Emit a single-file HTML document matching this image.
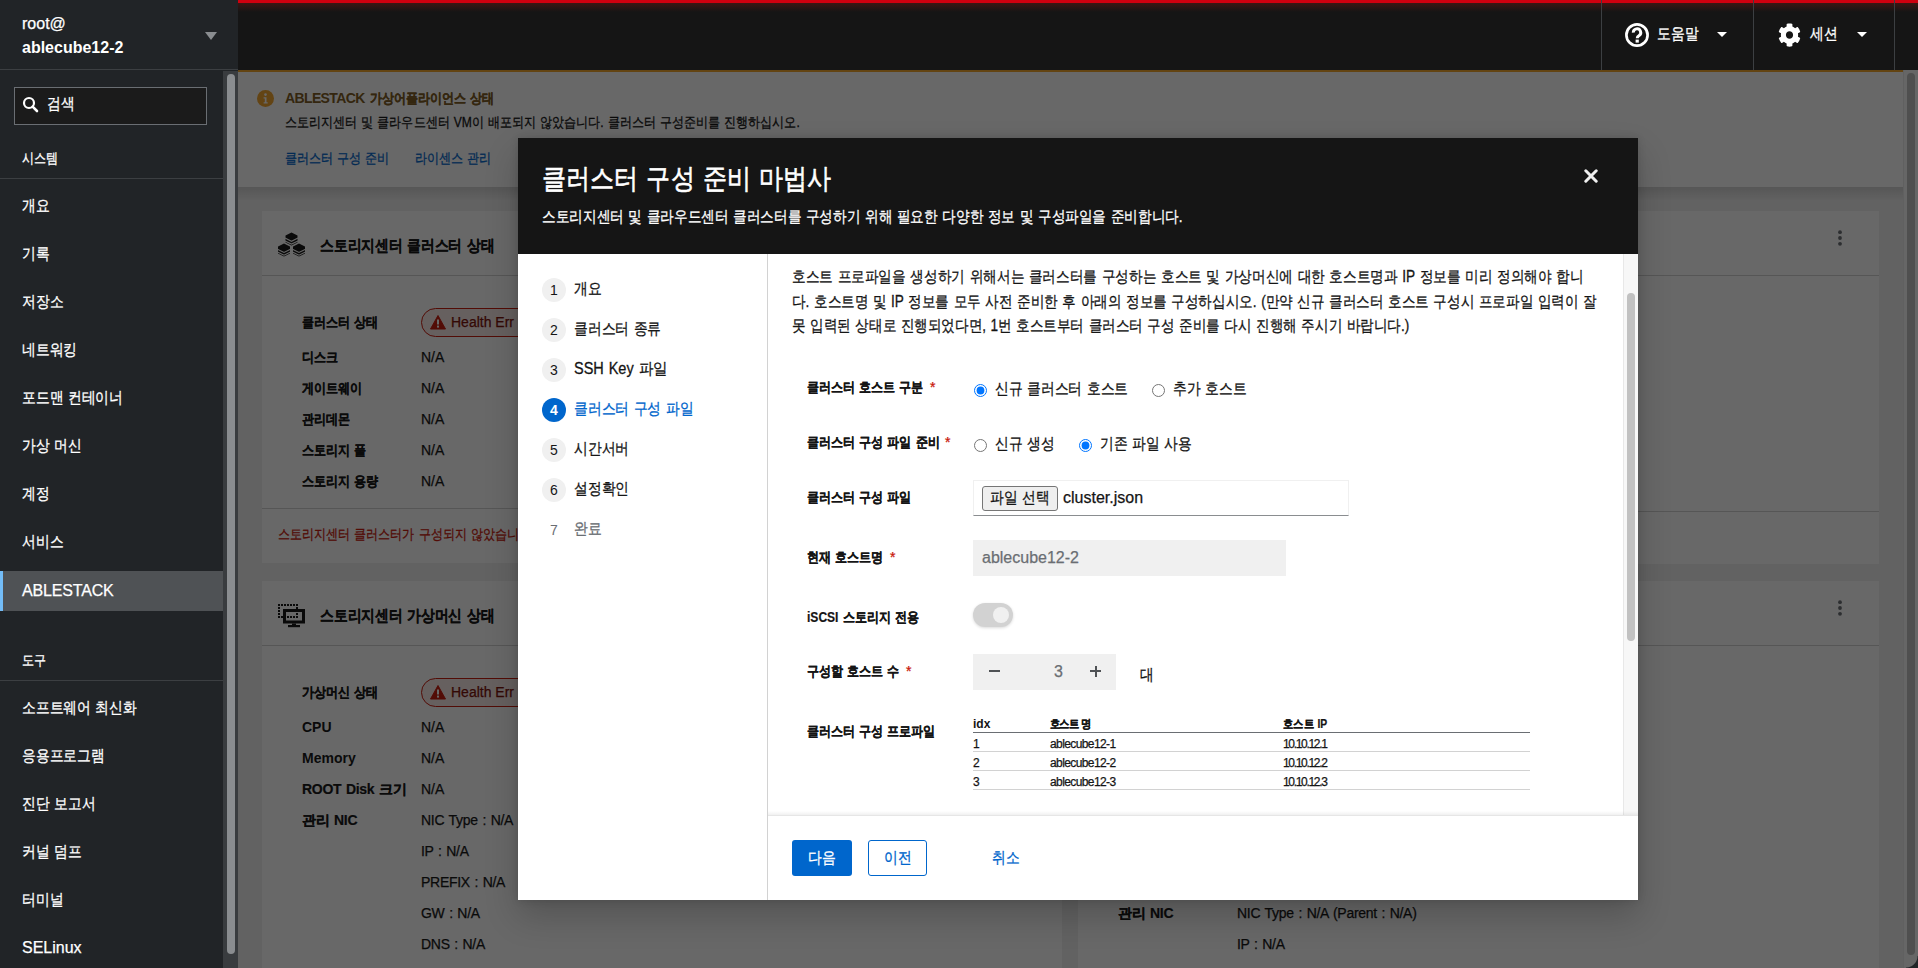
<!DOCTYPE html>
<html><head><meta charset="utf-8">
<style>
*{box-sizing:border-box;margin:0;padding:0}
html,body{width:1918px;height:968px;overflow:hidden;background:#212427;font-family:"Liberation Sans",sans-serif;color:#151515}
.a{position:absolute}
.t{position:absolute;white-space:nowrap;line-height:20px;letter-spacing:-0.152em;word-spacing:0.16em}
.L{word-spacing:0.07em}
.t{-webkit-text-stroke:0.25px}
.n{letter-spacing:0}
.b{-webkit-text-stroke:0}
.kr{letter-spacing:0;word-spacing:0.06em;transform:scaleX(.86);transform-origin:0 0;-webkit-text-stroke:0.3px}
.k{letter-spacing:0;word-spacing:0.06em;transform:scaleX(.86);transform-origin:0 0;-webkit-text-stroke:0.2px}
.s16{font-size:16px}.s14{font-size:14px}.s12{font-size:12px}
.b{font-weight:bold}
.w{color:#fff}
/* sidebar */
#side{position:absolute;left:0;top:0;width:238px;height:968px;background:#212427;color:#fff}
/* header */
#hdr{position:absolute;left:238px;top:0;width:1680px;height:70px;background:#151515}
.sep{position:absolute;top:0;width:1px;height:70px;background:#3c3f42}
.caretw{position:absolute;width:0;height:0;border-left:5px solid transparent;border-right:5px solid transparent;border-top:5px solid #fff}
/* content */
.card{position:absolute;background:#fff}
.hr{position:absolute;height:1px;background:#d2d2d2}
.badge{position:absolute;height:29px;border:1px solid #c9190b;border-radius:15px;background:#faeae8}
/* modal */
#modal{position:absolute;left:518px;top:138px;width:1120px;height:762px;background:#fff;box-shadow:0 16px 32px 0 rgba(0,0,0,0.2),0 0 8px 0 rgba(0,0,0,0.14);overflow:hidden}
.step{position:absolute;left:24px;width:24px;height:24px;border-radius:12px;background:#f0f0f0;font-size:14px;line-height:24px;text-align:center;color:#151515}
</style></head>
<body>
<!-- ============ SIDEBAR ============ -->
<div id="side">
  <div class="a" style="left:0;top:0;width:238px;height:70px;border-bottom:1px solid #3c3f42"></div>
  <div class="t" style="left:22px;top:14px;font-size:16px;letter-spacing:0">root@</div>
  <div class="t b" style="left:22px;top:38px;font-size:16px;letter-spacing:0">ablecube12-2</div>
  <div class="a" style="left:205px;top:32px;width:0;height:0;border-left:6px solid transparent;border-right:6px solid transparent;border-top:8px solid #8a8d90"></div>
  <div class="a" style="left:223px;top:71px;width:15px;height:897px;background:#393c3f"></div>
  <div class="a" style="left:227px;top:74px;width:8px;height:880px;background:#8a8d90;border-radius:4px"></div>
  <div class="a" style="left:14px;top:87px;width:193px;height:38px;background:#1b1b1b;border:1px solid #6a6e73"></div>
  <svg class="a" style="left:22px;top:96px" width="17" height="17" viewBox="0 0 17 17"><circle cx="7" cy="7" r="5" fill="none" stroke="#fff" stroke-width="2.2"/><line x1="10.6" y1="10.6" x2="15" y2="15" stroke="#fff" stroke-width="2.6" stroke-linecap="round"/></svg>
  <div class="t s16 kr" style="left:47px;top:94px">검색</div>
  <div class="t s14 kr" style="left:22px;top:148px">시스템</div>
  <div class="a" style="left:0;top:178px;width:223px;height:1px;background:#3c3f42"></div>
  <div class="t s16 kr" style="left:22px;top:196px">개요</div>
  <div class="t s16 kr" style="left:22px;top:244px">기록</div>
  <div class="t s16 kr" style="left:22px;top:292px">저장소</div>
  <div class="t s16 kr" style="left:22px;top:340px">네트워킹</div>
  <div class="t s16 kr" style="left:22px;top:388px">포드맨 컨테이너</div>
  <div class="t s16 kr" style="left:22px;top:436px">가상 머신</div>
  <div class="t s16 kr" style="left:22px;top:484px">계정</div>
  <div class="t s16 kr" style="left:22px;top:532px">서비스</div>
  <div class="a" style="left:0;top:571px;width:223px;height:40px;background:#4f5255;border-left:3px solid #73bcf7"></div>
  <div class="t s16" style="left:22px;top:581px;letter-spacing:-0.01em">ABLESTACK</div>
  <div class="t s14 kr" style="left:22px;top:650px">도구</div>
  <div class="a" style="left:0;top:680px;width:223px;height:1px;background:#3c3f42"></div>
  <div class="t s16 kr" style="left:22px;top:698px">소프트웨어 최신화</div>
  <div class="t s16 kr" style="left:22px;top:746px">응용프로그램</div>
  <div class="t s16 kr" style="left:22px;top:794px">진단 보고서</div>
  <div class="t s16 kr" style="left:22px;top:842px">커널 덤프</div>
  <div class="t s16 kr" style="left:22px;top:890px">터미널</div>
  <div class="t s16" style="left:22px;top:938px;letter-spacing:0">SELinux</div>
</div>

<!-- ============ HEADER ============ -->
<div id="hdr">
  <div class="a" style="left:0;top:0;width:1680px;height:3px;background:#cf000f"></div>
  <div class="a" style="left:0;top:3px;width:1680px;height:9px;background:linear-gradient(rgba(201,25,11,0.22),rgba(201,25,11,0))"></div>
  <div class="sep" style="left:1363px"></div><div class="sep" style="left:1515px"></div><div class="sep" style="left:1656px"></div>
  <svg class="a" style="left:1387px;top:23px" width="24" height="24" viewBox="0 0 24 24"><circle cx="12" cy="12" r="10.6" fill="none" stroke="#fff" stroke-width="2.7"/><path d="M8.3 9.6a3.7 3.7 0 1 1 5.6 3.1c-1.2.7-1.6 1.1-1.6 2.2v.4" fill="none" stroke="#fff" stroke-width="3"/><rect x="10.6" y="16.6" width="3.2" height="3" fill="#fff"/></svg>
  <div class="t s16 w kr" style="left:1419px;top:24px">도움말</div>
  <div class="caretw" style="left:1479px;top:32px"></div>
  <svg class="a" style="left:1540px;top:22.5px" width="23" height="24" viewBox="0 0 512 512" preserveAspectRatio="none"><path fill="#fff" d="M487.4 315.7l-42.6-24.6c4.3-23.2 4.3-47 0-70.2l42.6-24.6c4.9-2.8 7.1-8.6 5.5-14-11.1-35.6-30-67.8-54.7-94.6-3.8-4.1-10-5.1-14.8-2.3L380.8 110c-17.9-15.4-38.5-27.3-60.8-35.1V25.8c0-5.6-3.9-10.5-9.4-11.7-36.7-8.2-74.3-7.8-109.2 0-5.5 1.2-9.400 6.1-9.4 11.7V75c-22.2 7.9-42.8 19.8-60.8 35.1L88.7 85.5c-4.9-2.8-11-1.9-14.8 2.3-24.7 26.7-43.6 58.9-54.7 94.6-1.7 5.4.6 11.2 5.5 14L67.3 221c-4.3 23.2-4.3 47 0 70.2l-42.6 24.6c-4.9 2.8-7.1 8.6-5.5 14 11.1 35.6 30 67.8 54.7 94.6 3.8 4.1 10 5.1 14.8 2.3l42.6-24.6c17.9 15.4 38.5 27.3 60.8 35.1v49.2c0 5.6 3.9 10.5 9.4 11.700 36.7 8.2 74.3 7.8 109.2 0 5.5-1.2 9.4-6.1 9.4-11.7v-49.2c22.2-7.9 42.8-19.8 60.8-35.1l42.6 24.6c4.9 2.8 11 1.9 14.8-2.3 24.7-26.7 43.6-58.9 54.7-94.6 1.5-5.5-.7-11.3-5.6-14.1zM256 336c-44.1 0-80-35.900-80-80s35.9-80 80-80 80 35.9 80 80-35.9 80-80 80z"/></svg>
  <div class="t s16 w kr" style="left:1572px;top:24px">세션</div>
  <div class="caretw" style="left:1619px;top:32px"></div>
</div>

<!-- ============ CONTENT (under overlay) ============ -->
<div class="a" style="left:238px;top:70px;width:1680px;height:898px;background:#f0f0f0"></div>
<!-- alert -->
<div class="a" style="left:238px;top:70px;width:1665px;height:117px;background:#fff;border-top:2px solid #f2a52a"></div>
<div class="a" style="left:238px;top:187px;width:1665px;height:14px;background:linear-gradient(rgba(0,0,0,0.12),rgba(0,0,0,0))"></div>
<svg class="a" style="left:257px;top:90px" width="17" height="17" viewBox="0 0 17 17"><circle cx="8.5" cy="8.5" r="8.5" fill="#f3a52d"/><circle cx="8.5" cy="4.6" r="1.3" fill="#fff"/><path d="M6.6 7.2h2.9v5h1.2v1.4H6.6v-1.4h1.2V8.6H6.6z" fill="#fff"/></svg>
<div class="t s14 b" style="left:285px;top:88px;color:#7d5a22;letter-spacing:-0.045em">ABLESTACK</div><div class="t s14 b k" style="left:370px;top:88px;color:#7d5a22">가상어플라이언스 상태</div>
<div class="t s14 kr" style="left:285px;top:112px">스토리지센터 및 클라우드센터 <span class="n">VM</span>이 배포되지 않았습니다. 클러스터 구성준비를 진행하십시오.</div>
<div class="t s14 kr" style="left:285px;top:148px;color:#0066cc">클러스터 구성 준비</div>
<div class="t s14 kr" style="left:415px;top:148px;color:#0066cc">라이센스 관리</div>

<!-- card 1 -->
<div class="card" style="left:262px;top:211px;width:800px;height:352px"></div>
<div class="hr" style="left:262px;top:275px;width:800px"></div>
<div class="hr" style="left:262px;top:508px;width:800px"></div>
<svg class="a" style="left:277px;top:232px" width="29" height="26" viewBox="0 0 29 26"><path d="M14.5 0.5L20.5 3.5V10.5L14.5 13.5L8.5 10.5V3.5ZM7 11.6L13 14.6V21.6L7 24.6L1 21.6V14.6ZM22 11.6L28 14.6V21.6L22 24.6L16 21.6V14.6Z" fill="#151515"/><path d="M8.0 6.1L14.5 9.3L21.0 6.1M8.0 8.9L14.5 12.100000000000001L21.0 8.9M0.5 17.2L7 20.4L13.5 17.2M0.5 20.0L7 23.2L13.5 20.0M15.5 17.2L22 20.4L28.5 17.2M15.5 20.0L22 23.2L28.5 20.0" fill="none" stroke="#fff" stroke-width="1.1"/></svg>
<div class="t s16 b k" style="left:320px;top:236px">스토리지센터 클러스터 상태</div>
<div class="t s14 b k" style="left:302px;top:312px">클러스터 상태</div>
<div class="badge" style="left:421px;top:308px;width:120px"></div>
<svg class="a" style="left:430px;top:315px" width="16" height="15" viewBox="0 0 16 15"><path d="M8 0.5L15.5 14H0.5z" fill="#c9190b" stroke="#c9190b" stroke-linejoin="round"/><rect x="7" y="4.5" width="2" height="5" fill="#fff"/><rect x="7" y="10.6" width="2" height="2" fill="#fff"/></svg>
<div class="t s14" style="left:451px;top:312px;color:#7d1007;letter-spacing:0;word-spacing:0">Health Err</div>
<div class="t s14 b k" style="left:302px;top:347px">디스크</div><div class="t s14" style="left:421px;top:347px;letter-spacing:0">N/A</div>
<div class="t s14 b k" style="left:302px;top:378px">게이트웨이</div><div class="t s14" style="left:421px;top:378px;letter-spacing:0">N/A</div>
<div class="t s14 b k" style="left:302px;top:409px">관리데몬</div><div class="t s14" style="left:421px;top:409px;letter-spacing:0">N/A</div>
<div class="t s14 b k" style="left:302px;top:440px">스토리지 풀</div><div class="t s14" style="left:421px;top:440px;letter-spacing:0">N/A</div>
<div class="t s14 b k" style="left:302px;top:471px">스토리지 용량</div><div class="t s14" style="left:421px;top:471px;letter-spacing:0">N/A</div>
<div class="t s14 kr" style="left:278px;top:524px;color:#c9190b">스토리지센터 클러스터가 구성되지 않았습니다.</div>

<!-- card 2 (right) -->
<div class="card" style="left:1078px;top:211px;width:801px;height:353px"></div>
<div class="hr" style="left:1078px;top:275px;width:801px"></div>
<div class="hr" style="left:1078px;top:511px;width:801px"></div>
<svg class="a" style="left:1836px;top:230px" width="8" height="16" viewBox="0 0 8 16"><circle cx="4" cy="2.2" r="1.9" fill="#6a6e73"/><circle cx="4" cy="8" r="1.9" fill="#6a6e73"/><circle cx="4" cy="13.8" r="1.9" fill="#6a6e73"/></svg>

<!-- card 3 -->
<div class="card" style="left:262px;top:581px;width:800px;height:400px"></div>
<div class="hr" style="left:262px;top:645px;width:800px"></div>
<svg class="a" style="left:277px;top:603px" width="29" height="25" viewBox="0 0 29 25">
  <g fill="#151515">
   <rect x="1" y="1" width="2" height="2"/><rect x="4" y="1" width="2" height="2"/><rect x="7" y="1" width="2" height="2"/><rect x="10" y="1" width="2" height="2"/><rect x="13" y="1" width="2" height="2"/><rect x="16" y="1" width="2" height="2"/><rect x="19" y="1" width="2" height="2"/>
   <rect x="1" y="4" width="2" height="2"/><rect x="1" y="7" width="2" height="2"/><rect x="1" y="10" width="2" height="2"/><rect x="1" y="13" width="2" height="2"/><rect x="4" y="13" width="2" height="2"/>
   <rect x="19" y="4" width="2" height="2"/>
   <path d="M6 6h22v14.5H6zM9 9v8.5h16V9z" fill-rule="evenodd"/>
   <rect x="10" y="13" width="2" height="2"/><rect x="13" y="13" width="2" height="2"/><rect x="16" y="13" width="2" height="2"/><rect x="19" y="13" width="2" height="2"/><rect x="19" y="10" width="2" height="2"/>
   <rect x="15" y="20.5" width="4" height="2"/><rect x="11" y="22" width="12" height="2.2"/>
  </g>
</svg>
<div class="t s16 b k" style="left:320px;top:606px">스토리지센터 가상머신 상태</div>
<div class="t s14 b k" style="left:302px;top:682px">가상머신 상태</div>
<div class="badge" style="left:421px;top:678px;width:120px"></div>
<svg class="a" style="left:430px;top:685px" width="16" height="15" viewBox="0 0 16 15"><path d="M8 0.5L15.5 14H0.5z" fill="#c9190b" stroke="#c9190b" stroke-linejoin="round"/><rect x="7" y="4.5" width="2" height="5" fill="#fff"/><rect x="7" y="10.6" width="2" height="2" fill="#fff"/></svg>
<div class="t s14" style="left:451px;top:682px;color:#7d1007;letter-spacing:0;word-spacing:0">Health Err</div>
<div class="t s14 b" style="left:302px;top:717px;letter-spacing:0">CPU</div><div class="t s14" style="left:421px;top:717px;letter-spacing:0">N/A</div>
<div class="t s14 b" style="left:302px;top:748px;letter-spacing:0">Memory</div><div class="t s14" style="left:421px;top:748px;letter-spacing:0">N/A</div>
<div class="t s14 b" style="left:302px;top:779px;letter-spacing:-0.02em;word-spacing:0.07em;-webkit-text-stroke:0.2px">ROOT Disk 크기</div><div class="t s14" style="left:421px;top:779px;letter-spacing:0">N/A</div>
<div class="t s14 b" style="left:302px;top:810px;letter-spacing:-0.02em;word-spacing:0.07em;-webkit-text-stroke:0.2px">관리 NIC</div><div class="t s14" style="left:421px;top:810px;letter-spacing:-0.02em;word-spacing:0.07em">NIC Type : N/A</div>
<div class="t s14" style="left:421px;top:841px;letter-spacing:-0.02em;word-spacing:0.07em">IP : N/A</div>
<div class="t s14" style="left:421px;top:872px;letter-spacing:-0.02em;word-spacing:0.07em">PREFIX : N/A</div>
<div class="t s14" style="left:421px;top:903px;letter-spacing:-0.02em;word-spacing:0.07em">GW : N/A</div>
<div class="t s14" style="left:421px;top:934px;letter-spacing:-0.02em;word-spacing:0.07em">DNS : N/A</div>

<!-- card 4 (right) -->
<div class="card" style="left:1078px;top:581px;width:801px;height:400px"></div>
<div class="hr" style="left:1078px;top:645px;width:801px"></div>
<svg class="a" style="left:1836px;top:600px" width="8" height="16" viewBox="0 0 8 16"><circle cx="4" cy="2.2" r="1.9" fill="#6a6e73"/><circle cx="4" cy="8" r="1.9" fill="#6a6e73"/><circle cx="4" cy="13.8" r="1.9" fill="#6a6e73"/></svg>
<div class="t s14 b" style="left:1118px;top:903px;letter-spacing:-0.02em;word-spacing:0.07em;-webkit-text-stroke:0.2px">관리 NIC</div>
<div class="t s14" style="left:1237px;top:903px;letter-spacing:-0.02em;word-spacing:0.07em">NIC Type : N/A (Parent : N/A)</div>
<div class="t s14" style="left:1237px;top:934px;letter-spacing:-0.02em;word-spacing:0.07em">IP : N/A</div>

<!-- content scrollbar -->
<div class="a" style="left:1903px;top:70px;width:15px;height:898px;background:#fafafa;border-left:1px solid #ececec"></div>
<div class="a" style="left:1907px;top:73px;width:8px;height:882px;background:#c1c1c1;border-radius:4px"></div>

<!-- overlay -->
<div class="a" style="left:238px;top:70px;width:1680px;height:898px;background:rgba(3,3,3,0.6)"></div>
<div class="a" style="left:1906px;top:956px;width:12px;height:12px;background:radial-gradient(circle at 0 0,rgba(0,0,0,0) 11px,#212427 12px)"></div>

<!-- ============ MODAL ============ -->
<div id="modal">
  <div class="a" style="left:0;top:0;width:1120px;height:116px;background:#151515"></div>
  <div class="t w kr" style="left:24px;top:24px;font-size:28px;line-height:34px;-webkit-text-stroke:0.6px">클러스터 구성 준비 마법사</div>
  <div class="t s16 w kr" style="transform:scaleX(0.852);left:24px;top:69px">스토리지센터 및 클라우드센터 클러스터를 구성하기 위해 필요한 다양한 정보 및 구성파일을 준비합니다.</div>
  <svg class="a" style="left:1066px;top:31px" width="14" height="14" viewBox="0 0 14 14"><path d="M1.8 1.8L12.2 12.2M12.2 1.8L1.8 12.2" stroke="#f0f0f0" stroke-width="3" stroke-linecap="round"/></svg>

  <!-- nav -->
  <div class="a" style="left:249px;top:116px;width:1px;height:646px;background:#d2d2d2"></div>
  <div class="step" style="top:140px">1</div><div class="t s16 kr" style="left:56px;top:141px">개요</div>
  <div class="step" style="top:180px">2</div><div class="t s16 kr" style="left:56px;top:181px">클러스터 종류</div>
  <div class="step" style="top:220px">3</div><div class="t s16 kr" style="transform:scaleX(0.905);left:56px;top:221px">SSH Key 파일</div>
  <div class="step" style="top:260px;background:#0066cc;color:#fff;font-weight:bold">4</div><div class="t s16 kr" style="left:56px;top:261px;color:#0066cc">클러스터 구성 파일</div>
  <div class="step" style="top:300px">5</div><div class="t s16 kr" style="left:56px;top:301px">시간서버</div>
  <div class="step" style="top:340px">6</div><div class="t s16 kr" style="left:56px;top:341px">설정확인</div>
  <div class="step" style="top:380px;background:transparent;color:#6a6e73">7</div><div class="t s16 kr" style="left:56px;top:381px;color:#6a6e73">완료</div>

  <!-- main -->
  <div class="t s16 kr" style="transform:scaleX(0.853);left:274px;top:129px">호스트 프로파일을 생성하기 위해서는 클러스터를 구성하는 호스트 및 가상머신에 대한 호스트명과 <span class="n">IP</span> 정보를 미리 정의해야 합니</div>
  <div class="t s16 kr" style="transform:scaleX(0.849);left:274px;top:154px">다. 호스트명 및 <span class="n">IP</span> 정보를 모두 사전 준비한 후 아래의 정보를 구성하십시오. (만약 신규 클러스터 호스트 구성시 프로파일 입력이 잘</div>
  <div class="t s16 kr" style="transform:scaleX(0.848);left:274px;top:178px">못 입력된 상태로 진행되었다면, 1번 호스트부터 클러스터 구성 준비를 다시 진행해 주시기 바랍니다.)</div>

  <div class="t s14 b k" style="left:289px;top:239px">클러스터 호스트 구분</div><div class="t s14" style="left:412px;top:239px;color:#c9190b">*</div>
  <input type="radio" checked class="a" style="left:456px;top:246px;width:13px;height:13px;margin:0">
  <div class="t s16 kr" style="left:477px;top:241px">신규 클러스터 호스트</div>
  <input type="radio" class="a" style="left:634px;top:246px;width:13px;height:13px;margin:0">
  <div class="t s16 kr" style="left:655px;top:241px">추가 호스트</div>

  <div class="t s14 b k" style="left:289px;top:294px">클러스터 구성 파일 준비</div><div class="t s14" style="left:427px;top:294px;color:#c9190b">*</div>
  <input type="radio" class="a" style="left:456px;top:301px;width:13px;height:13px;margin:0">
  <div class="t s16 kr" style="left:477px;top:296px">신규 생성</div>
  <input type="radio" checked class="a" style="left:561px;top:301px;width:13px;height:13px;margin:0">
  <div class="t s16 kr" style="left:582px;top:296px">기존 파일 사용</div>

  <div class="t s14 b k" style="left:289px;top:349px">클러스터 구성 파일</div>
  <div class="a" style="left:455px;top:342px;width:376px;height:36px;border:1px solid #f0f0f0;border-bottom-color:#8a8d90"></div>
  <div class="a" style="left:464px;top:348px;width:76px;height:25px;background:#efefef;border:1px solid #767676;border-radius:3px"></div>
  <div class="t s16 kr" style="left:472px;top:350px">파일 선택</div>
  <div class="t s16" style="left:545px;top:350px;letter-spacing:0">cluster.json</div>

  <div class="t s14 b k" style="left:289px;top:409px">현재 호스트명</div><div class="t s14" style="left:372px;top:409px;color:#c9190b">*</div>
  <div class="a" style="left:455px;top:402px;width:313px;height:36px;background:#f0f0f0"></div>
  <div class="t s16" style="left:464px;top:410px;color:#6a6e73;letter-spacing:0">ablecube12-2</div>

  <div class="t s14 b k" style="left:289px;top:469px">iSCSI 스토리지 전용</div>
  <div class="a" style="left:455px;top:465px;width:40px;height:24px;border-radius:12px;background:#d2d2d2;box-shadow:0 1px 3px rgba(0,0,0,0.15)"></div>
  <div class="a" style="left:475px;top:469px;width:16px;height:16px;border-radius:8px;background:#f0f0f0"></div>

  <div class="t s14 b k" style="left:289px;top:523px">구성할 호스트 수</div><div class="t s14" style="left:388px;top:523px;color:#c9190b">*</div>
  <div class="a" style="left:455px;top:516px;width:143px;height:36px;background:#f0f0f0"></div>
  <div class="a" style="left:471px;top:532px;width:11px;height:2px;background:#4f5255"></div>
  <div class="t s16" style="left:536px;top:524px;color:#6a6e73;letter-spacing:0">3</div>
  <div class="a" style="left:572px;top:532px;width:11px;height:2px;background:#4f5255"></div>
  <div class="a" style="left:576.5px;top:527.5px;width:2px;height:11px;background:#4f5255"></div>
  <div class="t s16 kr" style="left:622px;top:527px">대</div>

  <div class="t s14 b k" style="left:289px;top:583px">클러스터 구성 프로파일</div>
  <div class="t s12 b" style="left:455px;top:576px;letter-spacing:0">idx</div>
  <div class="t s12 b k" style="left:532px;top:576px;letter-spacing:-0.08em">호스트 명</div>
  <div class="t s12 b k" style="left:765px;top:576px">호스트 IP</div>
  <div class="a" style="left:455px;top:594px;width:557px;height:1px;background:#6a6e73"></div>
  <div class="t s12" style="left:455px;top:596px;letter-spacing:0">1</div><div class="t s12" style="left:532px;top:596px;letter-spacing:-0.05em">ablecube12-1</div><div class="t s12" style="left:765px;top:596px;letter-spacing:-0.11em">10.10.12.1</div>
  <div class="a" style="left:455px;top:613px;width:557px;height:1px;background:#d2d2d2"></div>
  <div class="t s12" style="left:455px;top:615px;letter-spacing:0">2</div><div class="t s12" style="left:532px;top:615px;letter-spacing:-0.05em">ablecube12-2</div><div class="t s12" style="left:765px;top:615px;letter-spacing:-0.11em">10.10.12.2</div>
  <div class="a" style="left:455px;top:632px;width:557px;height:1px;background:#d2d2d2"></div>
  <div class="t s12" style="left:455px;top:634px;letter-spacing:0">3</div><div class="t s12" style="left:532px;top:634px;letter-spacing:-0.05em">ablecube12-3</div><div class="t s12" style="left:765px;top:634px;letter-spacing:-0.11em">10.10.12.3</div>
  <div class="a" style="left:455px;top:651px;width:557px;height:1px;background:#d2d2d2"></div>

  <!-- modal scrollbar -->
  <div class="a" style="left:1105px;top:116px;width:15px;height:561px;background:#f7f7f7;border-left:1px solid #e8e8e8"></div>
  <div class="a" style="left:1109px;top:155px;width:8px;height:348px;background:#c1c1c1;border-radius:4px"></div>

  <!-- footer -->
  <div class="a" style="left:250px;top:673px;width:870px;height:4px;background:linear-gradient(rgba(0,0,0,0),rgba(0,0,0,0.06))"></div>
  <div class="a" style="left:250px;top:677px;width:870px;height:1px;background:#e6e6e6"></div>
  <div class="a" style="left:274px;top:702px;width:60px;height:36px;background:#0066cc;border-radius:3px"></div>
  <div class="t s16 w kr" style="left:290px;top:710px">다음</div>
  <div class="a" style="left:350px;top:702px;width:59px;height:36px;border:1px solid #0066cc;border-radius:3px"></div>
  <div class="t s16 kr" style="left:366px;top:710px;color:#0066cc">이전</div>
  <div class="t s16 kr" style="left:474px;top:710px;color:#0066cc">취소</div>
</div>
<script id="wl">(function(){var W=[43.81, 101.39, 27.52, 36.12, 27.52, 27.52, 41.28, 55.04, 100.97, 59.69, 27.52, 41.28, 91.64, 24.08, 114.73, 82.56, 73.45, 59.69, 41.28, 59.59, 41.28, 27.52, 79.63, 124.47, 514.83, 104.46, 76.31, 174.42, 76.31, 63.03, 36.12, 23.34, 60.2, 23.34, 48.16, 23.34, 64.27, 23.34, 76.31, 23.34, 256.36, 174.42, 76.31, 63.03, 29.56, 23.34, 53.69, 23.34, 104.41, 23.34, 55.31, 92.14, 47.7, 84.19, 58.84, 64.02, 55.31, 179.56, 47.7, 289.3, 640.62, 27.52, 87.21, 93.47, 119.38, 55.04, 55.04, 27.52, 791.52, 804.65, 617.33, 116.5, 3.33, 133.14, 73.45, 132.61, 3.33, 59.69, 91.86, 104.46, 59.69, 80.05, 76.31, 3.33, 96.97, 111.83, 92.42, 3.33, 8.91, 13.76, 128.54, 17.34, 40.65, 44.21, 6.69, 65.53, 43.53, 6.69, 65.53, 43.53, 6.69, 65.53, 43.53, 27.52, 27.52, 27.52];var E=document.querySelectorAll('.t');if(E.length!==W.length)return;
for(var i=0;i<E.length;i++){var e=E[i];var r=e.getBoundingClientRect().width;var d=W[i]-r;if(Math.abs(d)<1.5)continue;
var cs=getComputedStyle(e);var n=e.textContent.length;var sp=e.querySelectorAll('.n');for(var j=0;j<sp.length;j++)n-=sp[j].textContent.length;if(n<1)continue;
var sc=1;var m=cs.transform.match(/matrix\(([^,]+)/);if(m)sc=parseFloat(m[1])||1;
var ls=parseFloat(cs.letterSpacing)||0;e.style.letterSpacing=(ls+d/n/sc)+'px';}})();</script>
</body></html>
